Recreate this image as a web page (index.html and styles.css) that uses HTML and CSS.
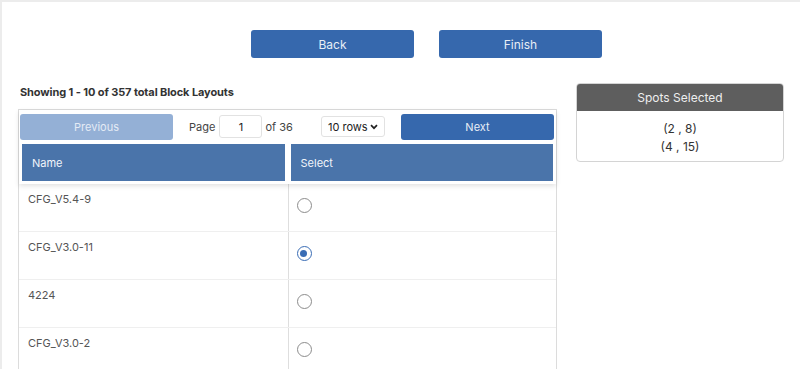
FILE: index.html
```html
<!DOCTYPE html>
<html>
<head>
<meta charset="utf-8">
<link rel="stylesheet" href="styles.css">
</head>
<body>
<div class="page">
  <div class="actions">
    <button class="btn">Back</button>
    <button class="btn">Finish</button>
  </div>
  <div class="content">
    <div class="left">
      <div class="summary">Showing 1 - 10 of 357 total Block Layouts</div>
      <div class="grid-wrap">
        <div class="top">
          <div class="toolbar">
            <button class="btn nav disabled">Previous</button>
            <div class="pager">
              <span>Page</span>
              <input class="page-input" type="text" value="1">
              <span>of 36</span>
            </div>
            <div class="rows-select">
              <span>10 rows</span>
              <svg width="8" height="6" viewBox="0 0 8 6"><path d="M1 1.2l3 3 3-3" fill="none" stroke="#222" stroke-width="1.7"/></svg>
            </div>
            <button class="btn nav">Next</button>
          </div>
          <div class="thead">
            <div class="th"><span>Name</span></div>
            <div class="th"><span>Select</span></div>
          </div>
        </div>
        <div class="tbody">
          <div class="tr"><div class="td">CFG_V5.4-9</div><div class="td"><span class="radio"></span></div></div>
          <div class="tr"><div class="td">CFG_V3.0-11</div><div class="td"><span class="radio checked"></span></div></div>
          <div class="tr"><div class="td">4224</div><div class="td"><span class="radio"></span></div></div>
          <div class="tr"><div class="td">CFG_V3.0-2</div><div class="td"><span class="radio"></span></div></div>
        </div>
      </div>
    </div>
    <div class="spots">
      <div class="spots-head">Spots Selected</div>
      <div class="spots-body">
        <div>(2 , 8)</div>
        <div>(4 , 15)</div>
      </div>
    </div>
  </div>
</div>
</body>
</html>
```

FILE: styles.css
```css
* { box-sizing: border-box; }
html, body { margin: 0; height: 100%; }
body {
  background: #ececec;
  font-family: Inter, "Liberation Sans", Arial, sans-serif;
  overflow: hidden;
}
.page {
  margin: 2px 0 0 2px;
  background: #fff;
  height: calc(100% - 2px);
}
.actions {
  display: flex;
  gap: 25px;
  padding: 28px 0 0 249px;
}
.btn {
  font-family: inherit;
  border: none;
  background: #3668ad;
  color: #e8eef6;
  font-size: 12px;
  border-radius: 3px;
  width: 163px;
  height: 28px;
  padding: 0;
}
.content {
  display: flex;
  margin-top: 25px;
  padding-left: 16px;
  gap: 19px;
}
.left { width: 539px; }
.summary {
  font-size: 11px;
  font-weight: 700;
  color: #333;
  line-height: 18px;
  margin-bottom: 8px;
  padding-left: 2px;
  letter-spacing: -0.1px;
}
.grid-wrap {
  border: 1px solid #dcdcdc;
  border-bottom: none;
}
.top {
  box-shadow: 0 2px 5px rgba(0,0,0,0.12);
  position: relative;
  padding-bottom: 3px;
}
.toolbar {
  display: flex;
  align-items: center;
  padding: 3px 1px 0 1px;
  height: 30px;
}
.btn.nav {
  width: 153px;
  height: 26px;
  font-size: 11px;
}
.btn.disabled { background: #94b0d6; color: #e4ebf5; }
.pager {
  display: flex;
  align-items: center;
  font-size: 11px;
  color: #444;
  margin-left: 16px;
  width: 132px;
}
.page-input {
  width: 43px;
  height: 23px;
  margin: 0 3px 0 4px;
  border: 1px solid #e2e2e2;
  border-radius: 3px;
  text-align: center;
  font-family: inherit;
  font-size: 11px;
  color: #222;
  padding: 0;
}
.rows-select {
  display: flex;
  align-items: center;
  justify-content: space-between;
  width: 64px;
  height: 21px;
  border: 1px solid #e2e2e2;
  border-radius: 3px;
  padding: 0 6px 0 6px;
  font-size: 11px;
  color: #222;
  margin-right: 16px;
}
.thead {
  display: grid;
  grid-template-columns: 1fr 1fr;
  margin-top: 4px;
}
.th {
  margin: 0 3px;
  height: 37px;
  background: #4a74aa;
  color: #f2f5fa;
  font-size: 11px;
  display: flex;
  align-items: center;
  padding-left: 10px;
}
.tr {
  display: grid;
  grid-template-columns: 1fr 1fr;
  height: 48px;
  border-bottom: 1px solid #efefef;
}
.td {
  font-size: 11px;
  color: #555;
  padding: 8px 9px;
  line-height: 14px;
}
.td + .td {
  border-left: 1px solid #dedede;
  padding: 14px 8px;
}
.radio {
  display: block;
  width: 15px;
  height: 15px;
  border-radius: 50%;
  border: 1.5px solid #8c8c8c;
}
.radio.checked {
  border-color: #3a6db5;
  position: relative;
}
.radio.checked::after {
  content: "";
  position: absolute;
  left: 2.5px;
  top: 2.5px;
  width: 7px;
  height: 7px;
  border-radius: 50%;
  background: #3a6db5;
}
.spots {
  width: 208px;
  height: 79px;
  border: 1px solid #d4d4d4;
  border-radius: 4px;
  overflow: hidden;
}
.spots-head {
  background: #5e5e5e;
  color: #eee;
  font-size: 12px;
  height: 27px;
  display: flex;
  align-items: center;
  justify-content: center;
}
.spots-body {
  text-align: center;
  font-size: 12px;
  color: #333;
  line-height: 18px;
  padding-top: 9px;
}
```
